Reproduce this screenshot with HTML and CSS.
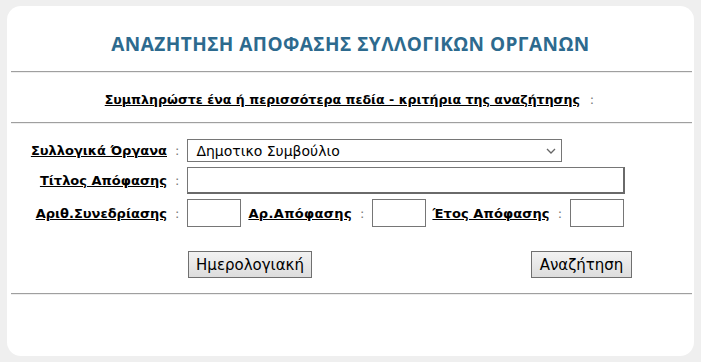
FILE: index.html
```html
<!DOCTYPE html>
<html lang="el">
<head>
<meta charset="utf-8">
<title>Αναζήτηση Απόφασης</title>
<link rel="stylesheet" href="styles.css">
</head>
<body>
<div class="card">
  <h1 class="title">ΑΝΑΖΗΤΗΣΗ ΑΠΟΦΑΣΗΣ ΣΥΛΛΟΓΙΚΩΝ ΟΡΓΑΝΩΝ</h1>
  <div class="rule rule-title"></div>
  <p class="hint"><span class="lbl hint-lbl">Συμπληρώστε ένα ή περισσότερα πεδία - κριτήρια της αναζήτησης</span><span class="colon hint-colon">:</span></p>
  <div class="rule rule-hint"></div>
  <div class="form">
    <div class="row">
      <span class="lbl field-lbl">Συλλογικά Όργανα</span><span class="colon">:</span>
      <div class="select"><span>Δημοτικο Συμβούλιο</span>
        <svg class="chev" width="10" height="6" viewBox="0 0 10 6"><path d="M1 1l4 4 4-4" fill="none" stroke="#666" stroke-width="1.3"/></svg>
      </div>
    </div>
    <div class="row">
      <span class="lbl field-lbl">Τίτλος Απόφασης</span><span class="colon">:</span>
      <div class="input input-wide"></div>
    </div>
    <div class="row">
      <span class="lbl field-lbl">Αριθ.Συνεδρίασης</span><span class="colon">:</span>
      <div class="input input-small"></div>
      <span class="lbl lbl-inline">Αρ.Απόφασης</span><span class="colon">:</span>
      <div class="input input-small"></div>
      <span class="lbl lbl-inline lbl-year">Έτος Απόφασης</span><span class="colon">:</span>
      <div class="input input-small"></div>
    </div>
    <div class="buttons">
      <button class="btn btn-cal">Ημερολογιακή</button>
      <button class="btn btn-search">Αναζήτηση</button>
    </div>
  </div>
  <div class="rule rule-bottom"></div>
</div>
</body>
</html>
```
FILE: styles.css
```css
html, body {
  margin: 0;
  padding: 0;
}
body {
  background: #efefef;
  font-family: "DejaVu Sans", Tahoma, sans-serif;
  width: 701px;
  height: 362px;
  overflow: hidden;
}
.card {
  box-sizing: border-box;
  margin: 6px 0 0 7px;
  width: 687px;
  height: 350px;
  background: #fff;
  border-radius: 14px;
  padding: 27px 2px 0 4px;
}
.title {
  margin: 0;
  text-align: center;
  font-family: "Open Sans", sans-serif;
  font-weight: 700;
  font-size: 19px;
  letter-spacing: 0.45px;
  line-height: 22px;
  color: #2d6a8e;
  padding-right: 2px;
}
.rule {
  border-top: 1px solid #9f9f9f;
  border-bottom: 1px solid #eeeeee;
}
.rule-title { margin-top: 16px; }
.hint {
  margin: 17px 0 0;
  line-height: 18px;
  text-align: center;
  padding-right: 4px;
}
.lbl {
  font-weight: 700;
  text-decoration: underline;
  color: #000;
  font-size: 13px;
}
.hint-lbl {
  font-size: 12.6px;
}
.colon {
  color: #777;
  font-size: 13px;
  margin-left: 8px;
  margin-right: 8px;
}
.hint-colon {
  margin-left: 10px;
  margin-right: 0;
}
.rule-hint { margin-top: 13px; }
.form {
  margin-top: 15px;
  display: flex;
  flex-direction: column;
  gap: 5px;
}
.row {
  display: flex;
  align-items: center;
}
.field-lbl {
  width: 156px;
  text-align: right;
}
.select {
  box-sizing: border-box;
  width: 375px;
  height: 23px;
  border: 1px solid #767676;
  display: flex;
  align-items: center;
  justify-content: space-between;
  padding: 0 5px 0 8px;
  font-family: "DejaVu Sans", sans-serif;
  font-size: 14px;
}
.input {
  box-sizing: border-box;
  height: 28px;
  border: 1px solid #767676;
}
.input-wide {
  width: 438px;
  height: 27px;
  border-right: 2px solid #6a6a6a;
  border-bottom: 2px solid #6a6a6a;
}
.input-small {
  width: 54px;
}
.lbl-inline {
  margin-left: 7px;
  letter-spacing: 0.35px;
}
.lbl-year {
  margin-left: 6px;
  letter-spacing: 0.1px;
}
.buttons {
  margin-top: 19px;
  display: flex;
  padding-left: 177px;
  width: 444px;
  justify-content: space-between;
}
.btn {
  height: 27px;
  border: 1px solid #707070;
  background: linear-gradient(#f2f2f2, #dddddd);
  font-family: "DejaVu Sans", sans-serif;
  font-size: 15px;
  padding: 0 4px;
  color: #000;
  border-radius: 0;
}
.btn-cal { width: 124px; }
.btn-search { width: 101px; }
.rule-bottom { margin-top: 15px; }
```
